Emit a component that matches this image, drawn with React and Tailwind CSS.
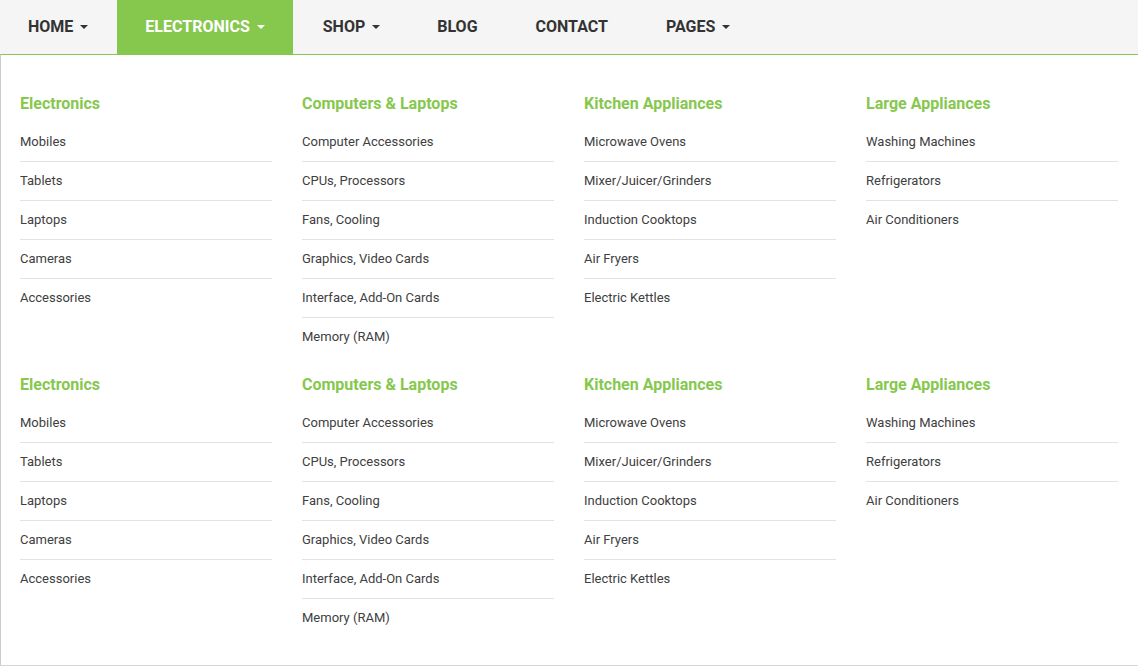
import React from "react";

const navItems = [
  { label: "HOME", caret: true, pad: "pl-[28px] pr-[29px]" },
  { label: "ELECTRONICS", caret: true, active: true, pad: "px-[28px]" },
  { label: "SHOP", caret: true, pad: "pl-[30px] pr-[28px]" },
  { label: "BLOG", pad: "px-[29px]" },
  { label: "CONTACT", pad: "px-[29px]" },
  { label: "PAGES", caret: true, pad: "px-[29px]" },
];

const columns = [
  { title: "Electronics", items: ["Mobiles", "Tablets", "Laptops", "Cameras", "Accessories"] },
  {
    title: "Computers & Laptops",
    items: [
      "Computer Accessories",
      "CPUs, Processors",
      "Fans, Cooling",
      "Graphics, Video Cards",
      "Interface, Add-On Cards",
      "Memory (RAM)",
    ],
  },
  {
    title: "Kitchen Appliances",
    items: ["Microwave Ovens", "Mixer/Juicer/Grinders", "Induction Cooktops", "Air Fryers", "Electric Kettles"],
  },
  { title: "Large Appliances", items: ["Washing Machines", "Refrigerators", "Air Conditioners"] },
];

function Caret({ active }) {
  return (
    <span
      className={
        "ml-[7px] inline-block h-0 w-0 border-x-[4px] border-t-[4px] border-x-transparent " +
        (active ? "border-t-white" : "border-t-[#333]")
      }
    />
  );
}

function Section() {
  return (
    <div className="grid grid-cols-4 gap-x-[30px]">
      {columns.map((col) => (
        <div key={col.title}>
          <h3 className="mb-[8px] text-[16px] font-bold leading-[22px] text-[#86c84e]">{col.title}</h3>
          <ul>
            {col.items.map((it, i) => (
              <li
                key={it}
                className={
                  "py-[10px] text-[13px] leading-[18px] text-[#404040] " +
                  (i < col.items.length - 1 ? "border-b border-[#e2e2e2]" : "")
                }
              >
                {it}
              </li>
            ))}
          </ul>
        </div>
      ))}
    </div>
  );
}

export default function App() {
  return (
    <div className="h-[667px] w-[1138px] overflow-hidden bg-white" style={{ fontFamily: "Roboto, 'Liberation Sans', sans-serif" }}>
      <nav className="flex h-[54px] bg-[#f5f5f5]">
        {navItems.map((n) => (
          <div
            key={n.label}
            className={
              "flex h-full items-center text-[16px] font-bold " +
              n.pad +
              " " +
              (n.active ? "bg-[#86c84e] text-white" : "text-[#333]")
            }
          >
            <span>{n.label}</span>
            {n.caret && <Caret active={n.active} />}
          </div>
        ))}
      </nav>
      <div className="flex h-[612px] flex-col gap-[18px] border-b border-l border-t border-b-[#d6d6d6] border-l-[#cccccc] border-t-[#86c84e] pb-[28px] pl-[19px] pr-[20px] pt-[38px]">
        <Section />
        <Section />
      </div>
    </div>
  );
}
